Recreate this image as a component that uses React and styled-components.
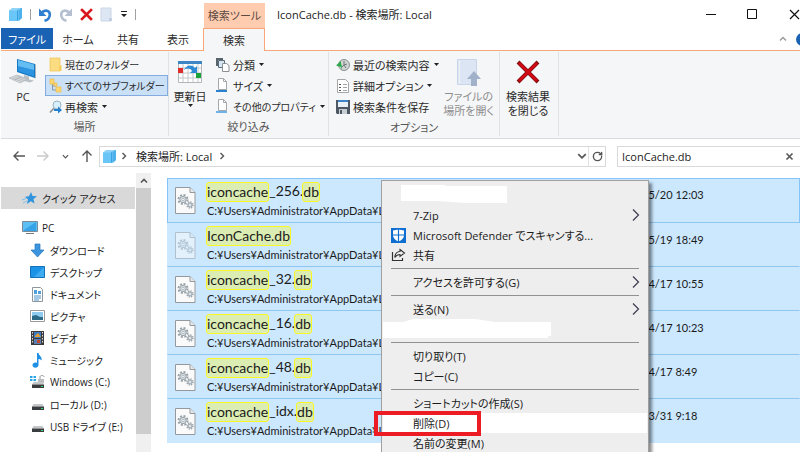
import React, { useState } from 'react';
import styled, { createGlobalStyle } from 'styled-components';
import { RotateCw } from 'lucide-react';

const GlobalStyle = createGlobalStyle`
  * {
    box-sizing: border-box;
  }
  body {
    margin: 0;
    background: #fff;
  }
  body, button, input {
    font-family: "Open Sans", "Noto Sans CJK JP", sans-serif;
    font-size: 11px;
    font-feature-settings: "palt";
    color: #1b1b1b;
  }
  button {
    border: 0;
    padding: 0;
    margin: 0;
    background: none;
  }
  ul {
    list-style: none;
    margin: 0;
    padding: 0;
  }
  svg {
    display: block;
    flex: none;
  }
`;

const Explorer = styled.div`
  position: relative;
  display: flex;
  flex-direction: column;
  height: 100vh;
  padding-left: 1px;
  overflow: hidden;
  background: #fff;
`;

/* ---------- title bar and tabs ---------- */

const TitleBar = styled.header`
  display: flex;
  align-items: center;
  height: 28px;
  flex: none;
`;

const QuickTools = styled.div`
  display: flex;
  align-items: center;
  gap: 7px;
  width: 203px;
  padding-left: 7px;
`;

const ToolButton = styled.button`
  display: flex;
`;

const ToolDivider = styled.span`
  width: 1px;
  height: 11px;
  background: #a0a0a0;
`;

const ToolTabLabel = styled.div`
  align-self: flex-end;
  width: 61px;
  height: 25px;
  line-height: 25px;
  text-align: center;
  background: #ffccb0;
  color: #5c4a40;
`;

const Title = styled.h1`
  flex: 1;
  margin: 0;
  padding-left: 12px;
  font-size: 11px;
  font-weight: 400;
  white-space: nowrap;
`;

const WindowButtons = styled.div`
  display: flex;
  gap: 31px;
`;

const TabBar = styled.nav`
  display: flex;
  height: 23px;
  flex: none;
  border-bottom: 1px solid #f9a67a;
`;

const Tab = styled.button`
  width: ${(p) => p.$width || 50}px;
  height: 22px;
  color: #2b2b2b;
`;

const FileTab = styled(Tab)`
  height: 21px;
  background: #1a62b4;
  color: #fff;
`;

const ActiveTab = styled(Tab)`
  height: 23px;
  border: 1px solid #f9a67a;
  border-bottom: 0;
  background: #f5f6f7;
`;

const TabEnd = styled.div`
  display: flex;
  align-items: center;
  gap: 9px;
  margin-left: auto;
  margin-right: -9px;
`;

/* ---------- ribbon ---------- */

const Ribbon = styled.section`
  display: flex;
  height: 88px;
  flex: none;
  padding-top: 1px;
  background: #f5f6f7;
  border-bottom: 1px solid #dadbdc;
`;

const Group = styled.div`
  display: flex;
  flex-direction: column;
  width: ${(p) => p.$width}px;
  margin-bottom: 2px;
  padding-top: 2px;
  border-right: 1px solid #e0e1e2;
`;

const GroupBody = styled.div`
  display: flex;
  height: 65px;
`;

const GroupLabel = styled.div`
  line-height: 20px;
  text-align: center;
  color: #555;
`;

const BigButton = styled.button`
  display: flex;
  flex-direction: column;
  align-items: center;
  width: ${(p) => p.$width}px;
  flex: none;
  padding-top: 4px;
  line-height: 14px;
  white-space: nowrap;
  color: ${(p) => (p.disabled ? '#8d8d8d' : '#2b2b2b')};
  svg:first-child {
    margin-bottom: 4px;
  }
`;

const SmallColumn = styled.div`
  display: flex;
  flex-direction: column;
  flex: none;
  padding-left: ${(p) => (p.$inset ? 3 : 0)}px;
`;

const SmallButton = styled.button`
  display: flex;
  align-items: center;
  gap: 3px;
  height: 21px;
  padding: 0 2px 0 3px;
  font-size: ${(p) => (p.$long ? 10 : 11)}px;
  white-space: nowrap;
  color: #2b2b2b;
  border: 1px solid ${(p) => (p.$on ? '#84abe0' : 'transparent')};
  background: ${(p) => (p.$on ? '#c9e0f7' : 'transparent')};
`;

/* ---------- address row ---------- */

const AddressRow = styled.div`
  display: flex;
  align-items: center;
  height: 34px;
  flex: none;
`;

const NavButtons = styled.div`
  display: flex;
  align-items: center;
  justify-content: space-between;
  width: 98px;
  padding: 0 6px 0 12px;
`;

const AddressBox = styled.div`
  display: flex;
  align-items: center;
  flex: 1;
  height: 21px;
  padding-left: 2px;
  border: 1px solid #d9d9d9;
`;

const Crumb = styled.a`
  margin: 0 6px;
  color: #1b1b1b;
  text-decoration: none;
  white-space: nowrap;
`;

const FirstChevron = styled.span`
  margin: 0 2px 0 3px;
`;

const AddressTools = styled.div`
  display: flex;
  align-items: center;
  align-self: stretch;
  margin-left: auto;
`;

const Refresh = styled.button`
  display: flex;
  align-items: center;
  justify-content: center;
  align-self: stretch;
  width: 17px;
  margin-left: 1px;
  border-left: 1px solid #e3e3e3;
`;

const SearchBox = styled.form`
  display: flex;
  align-items: center;
  width: 183px;
  height: 21px;
  margin-left: 11px;
  padding: 0 6px 0 4px;
  border: 1px solid #d9d9d9;
  border-right: 0;
`;

const SearchInput = styled.input`
  flex: 1;
  min-width: 0;
  border: 0;
  padding: 0;
  outline: none;
`;

/* ---------- side bar ---------- */

const Content = styled.div`
  display: flex;
  flex: 1;
  min-height: 0;
`;

const SideBar = styled.nav`
  width: 134px;
  flex: none;
  padding-top: 14px;
  overflow: hidden;
`;

const SideItem = styled.a`
  display: flex;
  align-items: center;
  gap: ${(p) => (p.$deep ? 5 : 4)}px;
  height: 22px;
  padding-left: ${(p) => (p.$deep ? 29 : 21)}px;
  margin-bottom: ${(p) => (p.$selected ? 8 : 0)}px;
  background: ${(p) => (p.$selected ? '#d9d9d9' : 'transparent')};
  color: #1b1b1b;
  font-size: 10px;
  text-decoration: none;
  white-space: nowrap;
`;

const ScrollTrack = styled.div`
  display: flex;
  flex-direction: column;
  width: 15px;
  flex: none;
  margin-left: 1px;
  background: #f0f0f0;
`;

const ScrollArrow = styled.button`
  display: flex;
  align-items: center;
  justify-content: center;
  height: 15px;
`;

const ScrollThumb = styled.div`
  flex: 1;
  margin-bottom: 18px;
  background: #cdcdcd;
`;

/* ---------- file list ---------- */

const FilePane = styled.main`
  flex: 1;
  min-width: 0;
  padding: 5px 0 0 16px;
`;

const FileRow = styled.li`
  display: flex;
  align-items: center;
  height: ${(p) => (p.$focused ? 45 : 44)}px;
  padding-left: 7px;
  font-family: Lato, "Noto Sans CJK JP", sans-serif;
  background: #cce8ff;
  border: 1px solid ${(p) => (p.$focused ? '#84c4f8' : '#cce8ff')};
  border-bottom-color: ${(p) => (p.$last ? '#cce8ff' : '#8fc6f0')};
`;

const FileText = styled.div`
  flex: 1;
  min-width: 0;
  padding-left: 11px;
`;

const FileName = styled.div`
  display: flex;
  font-size: 14px;
  line-height: 18px;
`;

const Mark = styled.mark`
  margin-left: -1px;
  border: 1px solid #fbf723;
  border-radius: 3px;
  background: #dcedb4;
  color: #1b1b1b;
`;

const FilePath = styled.div`
  line-height: 18px;
  white-space: nowrap;
`;

const FileDate = styled.time`
  width: 181px;
  flex: none;
  align-self: flex-start;
  padding-top: 7px;
  line-height: 18px;
`;

/* ---------- context menu ---------- */

const Menu = styled.div`
  position: absolute;
  top: 180px;
  left: 381px;
  width: 268px;
  padding: 4px 1px;
  border: 1px solid #a0a0a0;
  background: #eee;
  box-shadow: 3px 3px 3px rgba(0, 0, 0, 0.45);
`;

const MenuItem = styled.button`
  position: relative;
  display: grid;
  grid-template-columns: 30px 1fr 22px;
  align-items: center;
  width: 100%;
  height: 20px;
  text-align: left;
  white-space: nowrap;
  background: ${(p) => (p.$active ? '#fff' : 'transparent')};
  svg {
    justify-self: center;
  }
`;

const MenuLine = styled.hr`
  height: 1px;
  margin: 3px 8px;
  border: 0;
  background: #919191;
`;

const Blank = styled.div`
  height: 20px;
`;

const RedFrame = styled.span`
  position: absolute;
  top: -2px;
  left: -9px;
  width: 107px;
  height: 25px;
  border: 4px solid #ed1c24;
`;

/* ---------- icons ---------- */

const Caret = () => (
  <svg width="7" height="4" viewBox="0 0 7 4">
    <path d="M1 0h5L3.5 3z" fill="#222" />
  </svg>
);

const Chevron = ({ size = 8, dir = 'right', color = '#555', weight = 1.4 }) => {
  const paths = {
    right: 'M2.5 1l3 3-3 3',
    down: 'M1 2.5l3 3 3-3',
    up: 'M1 5.5l3-3 3 3',
  };
  return (
    <svg width={size} height={size} viewBox="0 0 8 8">
      <path d={paths[dir]} fill="none" stroke={color} strokeWidth={weight} />
    </svg>
  );
};

const MenuChevron = () => (
  <svg width="8" height="14" viewBox="0 0 8 14">
    <path d="M1 1.5L6.5 7 1 12.5" fill="none" stroke="#3c3c50" strokeWidth="1.2" />
  </svg>
);

const StackIcon = () => (
  <svg width="15" height="15" viewBox="0 0 15 15">
    <path d="M1 3.5L4 1h10v10l-3 3H1z" fill="#8fd3f8" />
    <path d="M1 3.5h8V14H1z" fill="#6ac6f7" />
    <path d="M9 3.5L10.500 2v11L9 14z" fill="#37a2e4" />
    <path d="M11 3l2-2h1v10l-3 2.500z" fill="#4cb2ec" />
  </svg>
);

const UndoIcon = ({ color, flip }) => (
  <svg width="14" height="15" viewBox="0 0 14 15">
    <g transform={flip ? 'matrix(-1 0 0 1 14 0)' : undefined}>
      <path d="M3 6.500C7 1.800 12 3.500 11.800 8 11.600 11 9.500 13 6.500 13.800" fill="none" stroke={color} strokeWidth="2.600" />
      <path d="M1 1.500v7.500h7.500z" fill={color} />
    </g>
  </svg>
);

const DeleteIcon = () => (
  <svg width="13" height="13" viewBox="0 0 13 13">
    <path d="M2 2l9 9M11 2l-9 9" stroke="#d9161c" strokeWidth="2.600" strokeLinecap="square" />
  </svg>
);

const BlankPageIcon = () => (
  <svg width="13" height="15" viewBox="0 0 13 15">
    <path d="M1 1h10v13H1z" fill="#dde6f3" stroke="#cbd6e6" />
    <path d="M9 11h3v3H9z" fill="#c3cfe1" />
  </svg>
);

const CustomizeIcon = () => (
  <svg width="8" height="8" viewBox="0 0 8 8">
    <path d="M1 1h6v1H1zM1 4h6L4 7z" fill="#222" />
  </svg>
);

const MinimizeIcon = () => (
  <svg width="10" height="11" viewBox="0 0 10 11">
    <path d="M0 5.500h10" stroke="#111" />
  </svg>
);

const MaximizeIcon = () => (
  <svg width="11" height="11" viewBox="0 0 11 11">
    <path d="M.5.500h9v9h-9z" fill="none" stroke="#111" />
  </svg>
);

const CloseIcon = () => (
  <svg width="11" height="11" viewBox="0 0 11 11">
    <path d="M1 1l9 9M10 1l-9 9" stroke="#111" strokeWidth="1.200" />
  </svg>
);

const HelpIcon = () => (
  <svg width="13" height="13" viewBox="0 0 13 13">
    <circle cx="6.500" cy="6.500" r="6.500" fill="#1a62b4" />
    <path d="M5 5c0-2 3-2 3 0 0 1-1.500 1-1.500 2.500M6.500 9v1" stroke="#fff" fill="none" />
  </svg>
);

const ComputerIcon = () => (
  <svg width="30" height="28" viewBox="0 0 30 28">
    <path d="M9 1l18 5v14l-18-6z" fill="#1679c4" />
    <path d="M10 2l16 4.500v6L10 9z" fill="#63bdf2" />
    <path d="M10 8l16 4v6.500L10 13z" fill="#2b93df" />
    <path d="M27 6l1 .5v14l-1-.5z" fill="#a9b4bd" />
    <path d="M16 17l5 1.500v3l5 1-4 2-9-2.500 3-1z" fill="#b9c0c6" />
    <path d="M1 20l8-3 11 4-8 4z" fill="#d8dcdf" stroke="#a7adb2" strokeWidth=".6" />
    <path d="M4 20l10 3.700M6.500 19l10 3.700M9 18l9 3.500M6 22l7-3" stroke="#a2a9af" strokeWidth=".6" />
  </svg>
);

const FolderIcon = () => (
  <svg width="13" height="15" viewBox="0 0 13 15">
    <path d="M1 1h10v13H1z" fill="#fbdc80" stroke="#f2c961" strokeWidth=".8" />
    <path d="M10 9l2.500-1v6H10z" fill="#f6cc5c" />
  </svg>
);

const SubfolderIcon = () => (
  <svg width="13" height="15" viewBox="0 0 13 15">
    <path d="M3.500 6v6h4M3.500 8h4" stroke="#8b98a5" fill="none" />
    <path d="M1 1h4v5H1zM5 5h3v3H5zM7 9h5v5H7z" fill="#fbd671" stroke="#edbd48" strokeWidth=".7" />
  </svg>
);

const SearchAgainIcon = () => (
  <svg width="13" height="14" viewBox="0 0 13 14">
    <path d="M5 8l-4 4.500" stroke="#8d9499" strokeWidth="1.800" />
    <circle cx="8" cy="5" r="4" fill="#d8effc" stroke="#9db4c4" />
    <path d="M5 9h4V6.500l4 3.500-4 3.500V11H5z" fill="#2380d0" />
  </svg>
);

const CalendarIcon = () => (
  <svg width="26" height="28" viewBox="0 0 26 28">
    <path d="M1.500 3.500h23v21h-23z" fill="#fff" stroke="#b2b7bb" />
    <path d="M1 3h24v3H1z" fill="#3c85c7" />
    <path d="M6 6v18M11 6v18M16 6v18M21 6v18M2 10h22M2 15h22M2 20h22" stroke="#c4c9cc" />
    <path d="M1 10h5v5H1z" fill="#e02b2b" />
    <path d="M19 15h5v5h-5z" fill="#19a33a" />
    <path d="M7 12c2-5 8-6 11-2l2-2v7h-7l2-2c-2-3-5-3-8-1z" fill="#2f8ad6" />
  </svg>
);

const TypeIcon = () => (
  <svg width="15" height="15" viewBox="0 0 15 15">
    <path d="M1 1h7v2H3v6H1z" fill="#59636c" />
    <path d="M3.500 3.500h6v7h-6z" fill="#d7e7f5" stroke="#5a6c7a" />
    <path d="M7.500 6.500h4l2.500 2v6H7.500z" fill="#fff" stroke="#8a8f94" />
  </svg>
);

const SizeIcon = ({ bar }) => (
  <svg width="15" height="15" viewBox="0 0 15 15">
    <path d="M3.500.500h5l3 3v8h-8z" fill="#fff" stroke="#a4a8ab" />
    <path d="M8.500.500v3h3" fill="none" stroke="#a4a8ab" />
    <path d="M1 12h11v2H1z" fill={bar} />
  </svg>
);

const RecentIcon = () => (
  <svg width="14" height="14" viewBox="0 0 14 14">
    <circle cx="8" cy="7" r="5.500" fill="#cfd5d3" stroke="#8a918f" />
    <path d="M8 3v4l3-1M8 7l-3 3M8 7l2 3" stroke="#6f7775" fill="none" />
    <path d="M0 7.500L5 3v3c1 1 1 3 0 6V9z" fill="#2ba84a" />
  </svg>
);

const AdvancedIcon = () => (
  <svg width="14" height="14" viewBox="0 0 14 14">
    <path d="M1.500.500h8l3 3v10h-11z" fill="#fff" stroke="#a6a6a6" />
    <path d="M3 5h2v1H3zM3 8h2v1H3zM3 11h2v1H3z" fill="#555" />
    <path d="M7 5.500h4M7 8.500h4M7 11.500h4" stroke="#a5a5a5" />
  </svg>
);

const SaveIcon = () => (
  <svg width="14" height="14" viewBox="0 0 14 14">
    <path d="M0 0h14v14H1l-1-1z" fill="#4e5864" />
    <path d="M2 0h10v7H2z" fill="#e9f1f8" />
    <path d="M2 0h10v2H2z" fill="#3e83c9" />
    <path d="M3 9h8v5H3z" fill="#c9ced3" />
    <path d="M4 10h2v4H4z" fill="#4e5864" />
  </svg>
);

const OpenLocationIcon = () => (
  <svg width="26" height="28" viewBox="0 0 26 28">
    <path d="M1.500 1.500h19v25h-19z" fill="#dbe5f3" stroke="#cad6e8" />
    <path d="M3.500 2v24" stroke="#eef3fa" />
    <path d="M18 13l7 8h-4v7h-6v-7h-4z" fill="#a2b1ca" />
  </svg>
);

const CloseSearchIcon = () => (
  <svg width="24" height="28" viewBox="0 0 24 28">
    <path d="M2 4l20 20M22 4L2 24" stroke="#7e1014" strokeWidth="4" />
    <path d="M3 5l18 18M21 5L3 23" stroke="#cf0a12" strokeWidth="2.600" />
  </svg>
);

const ArrowIcon = ({ color, up }) => (
  <svg width="12" height="12" viewBox="0 0 12 12">
    <path d={up ? 'M6 12V1M1.500 5.500L6 1l4.500 4.500' : 'M12 6H1M5.500 1.500L1 6l4.500 4.500'} fill="none" stroke={color} strokeWidth="1.400" />
  </svg>
);

const ForwardIcon = () => (
  <svg width="12" height="12" viewBox="0 0 12 12">
    <path d="M0 6h11M6.500 1.500L11 6l-4.500 4.500" fill="none" stroke="#c9c9c9" strokeWidth="1.400" />
  </svg>
);

const ClearIcon = () => (
  <svg width="9" height="9" viewBox="0 0 9 9">
    <path d="M1.500 1.500l6 6M7.500 1.500l-6 6" stroke="#555" strokeWidth="1.600" />
  </svg>
);

const StarIcon = () => (
  <svg width="16" height="14" viewBox="0 0 16 14">
    <path d="M9 1l1.500 4 4.500.300-3.500 2.700 1 4.500-3.700-2.300L5 13l1-4.500-3-2.800 4-.4z" fill="#2f93dd" />
    <path d="M0 9l4-1.500M1 12l4-2" stroke="#7fbfec" />
  </svg>
);

const PcIcon = () => (
  <svg width="16" height="14" viewBox="0 0 16 14">
    <path d="M.5.500h15v10H.5z" fill="#5cc0f5" stroke="#7b8a94" />
    <path d="M2 9L14 1v9H2z" fill="#35a3e8" />
    <path d="M4 12h8v1H4z" fill="#6f7b84" />
  </svg>
);

const DownloadIcon = () => (
  <svg width="15" height="15" viewBox="0 0 15 15">
    <path d="M5 1h5v6h4l-6.500 7L1 7h4z" fill="#3a94de" stroke="#2a76bd" strokeWidth=".7" />
  </svg>
);

const DesktopIcon = () => (
  <svg width="15" height="13" viewBox="0 0 15 13">
    <path d="M.5.500h14v11H.5z" fill="#1b93e6" stroke="#1571b6" />
    <path d="M14 1v10H4z" fill="#3fabf1" />
  </svg>
);

const DocumentIcon = () => (
  <svg width="15" height="15" viewBox="0 0 15 15">
    <path d="M2.500.500h8l2 2v12h-10z" fill="#fff" stroke="#8e979e" />
    <path d="M4 3h3v4H4zM8 4h3v3H8z" fill="#4da0dc" />
    <path d="M4 9h7M4 11h7M4 13h5" stroke="#4b90c8" />
  </svg>
);

const PictureIcon = () => (
  <svg width="15" height="12" viewBox="0 0 15 12">
    <path d="M.5.500h14v11H.5z" fill="#fff" stroke="#9a9a9a" />
    <path d="M2 2h11v8H2z" fill="#8fcaf0" />
    <path d="M2 6l4-1 4 2h3v3H2z" fill="#2d6a85" />
  </svg>
);

const VideoIcon = () => (
  <svg width="15" height="14" viewBox="0 0 15 14">
    <path d="M1 0h13v14H1z" fill="#3b3b3b" />
    <path d="M4 1h7v6H4z" fill="#3f79c4" />
    <path d="M4 8h7v5H4z" fill="#5b7fb0" />
    <path d="M5 5l3-3 3 4H5z" fill="#e0a030" />
    <path d="M7 9h3v3H7z" fill="#c0482f" />
    <path d="M2.500 1v12M12.500 1v12" stroke="#ddd" strokeDasharray="1.500 1.500" />
  </svg>
);

const MusicIcon = () => (
  <svg width="15" height="15" viewBox="0 0 15 15">
    <path d="M7 0h1.500c.5 3 4 3.500 3 7.500C11 6.500 9.500 6 8.500 6v6c0 3.500-6 3.500-6 .3C2.500 10 5 9 7 10z" fill="#1e90e6" />
  </svg>
);

const DriveIcon = ({ system }) => (
  <svg width="15" height="14" viewBox="0 0 15 14">
    {system && (
      <>
        <path d="M0 1h2.500v2H0zM3.500 1H6v2H3.500zM0 4h2.500v2H0zM3.500 4H6v2H3.500z" fill="#27a5e8" />
        <path d="M8 4h6v4H8z" fill="#b9bdc0" />
        <path d="M10 4V2c0-2 4-2 4 0" fill="none" stroke="#8e9396" />
      </>
    )}
    <path d="M3.500 7h9L14 9.500H2z" fill="#c4c7c9" />
    <path d="M2 9.500h12V13H2z" fill="#3a3d3f" />
    <path d="M11 11h2v1h-2z" fill="#44d366" />
  </svg>
);

const GearPageIcon = ({ faded }) => (
  <svg width="21" height="27" viewBox="0 0 21 27" opacity={faded ? 0.5 : 1}>
    <path d="M.5.500H15l5 5v21H.5z" fill="#fafafa" stroke="#96999c" />
    <path d="M15 .5v5h5" fill="#e6e8ea" stroke="#96999c" />
    <circle cx="8" cy="12.500" r="4.500" fill="none" stroke="#98a3aa" strokeWidth="2" strokeDasharray="2 1.530" />
    <circle cx="8" cy="12.500" r="3.200" fill="#d9e0e5" stroke="#98a3aa" />
    <circle cx="8" cy="12.500" r="1.200" fill="#fff" stroke="#98a3aa" strokeWidth=".7" />
    <circle cx="15" cy="18" r="3" fill="none" stroke="#98a3aa" strokeWidth="1.500" strokeDasharray="1.300 1.050" />
    <circle cx="15" cy="18" r="2" fill="#d0d8de" stroke="#98a3aa" />
    <circle cx="15" cy="18" r=".7" fill="#fff" />
  </svg>
);

const DefenderIcon = () => (
  <svg width="15" height="15" viewBox="0 0 15 15">
    <path d="M0 0h15v15H0z" fill="#0f6fd1" />
    <path d="M7.500 1.500l5.500 1v4.500c0 3-2.500 5.500-5.500 6.500C4.500 12.500 2 10 2 7V2.500z" fill="#fff" />
    <path d="M7.500 1v13M1 7h13" stroke="#0f6fd1" strokeWidth="1.200" />
  </svg>
);

const ShareIcon = () => (
  <svg width="15" height="14" viewBox="0 0 15 14">
    <path d="M1.500 4v8.500h10V10" fill="none" stroke="#333" strokeWidth="1.200" />
    <path d="M9 1.500L13.500 5 9 8.500v-2C6.500 6.500 5 7.500 3.800 9.500 4 6 6 3.700 9 3.500z" fill="none" stroke="#333" strokeWidth="1.100" />
  </svg>
);

/* ---------- data ---------- */

const places = [
  { name: 'クイック アクセス', icon: <StarIcon />, selected: true },
  { name: 'PC', icon: <PcIcon /> },
  { name: 'ダウンロード', icon: <DownloadIcon />, deep: true },
  { name: 'デスクトップ', icon: <DesktopIcon />, deep: true },
  { name: 'ドキュメント', icon: <DocumentIcon />, deep: true },
  { name: 'ピクチャ', icon: <PictureIcon />, deep: true },
  { name: 'ビデオ', icon: <VideoIcon />, deep: true },
  { name: 'ミュージック', icon: <MusicIcon />, deep: true },
  { name: 'Windows (C:)', icon: <DriveIcon system />, deep: true },
  { name: 'ローカル (D:)', icon: <DriveIcon />, deep: true },
  { name: 'USB ドライブ (E:)', icon: <DriveIcon />, deep: true },
];

// name is split so that the matched parts can be marked
const files = [
  { name: ['iconcache', '_256.', 'db'], date: '2020/5/20 12:03' },
  { name: ['IconCache.db'], date: '2020/5/19 18:49', faded: true },
  { name: ['iconcache', '_32.', 'db'], date: '2020/4/17 10:55' },
  { name: ['iconcache', '_16.', 'db'], date: '2020/4/17 10:23' },
  { name: ['iconcache', '_48.', 'db'], date: '2020/4/17 8:49' },
  { name: ['iconcache', '_idx.', 'db'], date: '2020/3/31 9:18' },
];

const path = 'C:¥Users¥Administrator¥AppData¥Local';

const RibbonBar = () => (
  <Ribbon>
    <Group $width={168}>
      <GroupBody>
        <BigButton $width={44}>
          <ComputerIcon />
          PC
        </BigButton>
        <SmallColumn>
          <SmallButton $long><FolderIcon />現在のフォルダー</SmallButton>
          <SmallButton $long $on><SubfolderIcon />すべてのサブフォルダー</SmallButton>
          <SmallButton><SearchAgainIcon />再検索<Caret /></SmallButton>
        </SmallColumn>
      </GroupBody>
      <GroupLabel>場所</GroupLabel>
    </Group>
    <Group $width={160}>
      <GroupBody>
        <BigButton $width={42}>
          <CalendarIcon />
          更新日
          <Caret />
        </BigButton>
        <SmallColumn>
          <SmallButton><TypeIcon />分類<Caret /></SmallButton>
          <SmallButton><SizeIcon bar="#2b7fd0" />サイズ<Caret /></SmallButton>
          <SmallButton $long><SizeIcon bar="#6fb2e8" />その他のプロパティ<Caret /></SmallButton>
        </SmallColumn>
      </GroupBody>
      <GroupLabel>絞り込み</GroupLabel>
    </Group>
    <Group $width={171}>
      <GroupBody>
        <SmallColumn $inset>
          <SmallButton><RecentIcon />最近の検索内容<Caret /></SmallButton>
          <SmallButton><AdvancedIcon />詳細オプション<Caret /></SmallButton>
          <SmallButton><SaveIcon />検索条件を保存</SmallButton>
        </SmallColumn>
        <BigButton $width={52} disabled>
          <OpenLocationIcon />
          <span>ファイルの</span>
          <span>場所を開く</span>
        </BigButton>
      </GroupBody>
      <GroupLabel>オプション</GroupLabel>
    </Group>
    <Group $width={59}>
      <GroupBody>
        <BigButton $width={56}>
          <CloseSearchIcon />
          <span>検索結果</span>
          <span>を閉じる</span>
        </BigButton>
      </GroupBody>
    </Group>
  </Ribbon>
);

const ContextMenu = () => (
  <Menu role="menu">
    <Blank>
      <svg width="130" height="20" viewBox="0 0 130 20">
        <path d="M18 0l44-1v2h62v17H83l-29-2H18z" fill="#fff" />
      </svg>
    </Blank>
    <MenuItem role="menuitem"><i />7-Zip<MenuChevron /></MenuItem>
    <MenuItem role="menuitem"><DefenderIcon />Microsoft Defender でスキャンする...</MenuItem>
    <MenuItem role="menuitem"><ShareIcon />共有</MenuItem>
    <MenuLine />
    <MenuItem role="menuitem"><i />アクセスを許可する(G)<MenuChevron /></MenuItem>
    <MenuLine />
    <MenuItem role="menuitem"><i />送る(N)<MenuChevron /></MenuItem>
    <Blank>
      <svg width="170" height="20" viewBox="0 0 170 20">
        <path d="M0 3h20l10-3h62l20 3h56v14h-3v2H0z" fill="#fff" />
      </svg>
    </Blank>
    <MenuLine />
    <MenuItem role="menuitem"><i />切り取り(T)</MenuItem>
    <MenuItem role="menuitem"><i />コピー(C)</MenuItem>
    <MenuLine />
    <MenuItem role="menuitem"><i />ショートカットの作成(S)</MenuItem>
    <MenuItem role="menuitem" $active><i />削除(D)<RedFrame /></MenuItem>
    <MenuItem role="menuitem"><i />名前の変更(M)</MenuItem>
  </Menu>
);

const App = () => {
  const [query, setQuery] = useState('IconCache.db');

  return (
    <>
      <GlobalStyle />
      <Explorer>
        <TitleBar>
          <QuickTools>
            <StackIcon />
            <ToolDivider />
            <ToolButton aria-label="元に戻す"><UndoIcon color="#2f7fd0" /></ToolButton>
            <ToolButton aria-label="やり直し"><UndoIcon color="#b4bfd0" flip /></ToolButton>
            <ToolButton aria-label="削除"><DeleteIcon /></ToolButton>
            <ToolButton aria-label="プロパティ"><BlankPageIcon /></ToolButton>
            <ToolButton aria-label="カスタマイズ"><CustomizeIcon /></ToolButton>
            <ToolDivider />
          </QuickTools>
          <ToolTabLabel>検索ツール</ToolTabLabel>
          <Title>IconCache.db - 検索場所: Local</Title>
          <WindowButtons>
            <ToolButton aria-label="最小化"><MinimizeIcon /></ToolButton>
            <ToolButton aria-label="最大化"><MaximizeIcon /></ToolButton>
            <ToolButton aria-label="閉じる"><CloseIcon /></ToolButton>
          </WindowButtons>
        </TitleBar>
        <TabBar>
          <FileTab $width={52}>ファイル</FileTab>
          <Tab>ホーム</Tab>
          <Tab>共有</Tab>
          <Tab>表示</Tab>
          <ActiveTab $width={62}>検索</ActiveTab>
          <TabEnd>
            <Chevron dir="up" color="#999" />
            <HelpIcon />
          </TabEnd>
        </TabBar>
        <RibbonBar />
        <AddressRow>
          <NavButtons>
            <ToolButton aria-label="戻る"><ArrowIcon color="#555" /></ToolButton>
            <ToolButton aria-label="進む"><ForwardIcon /></ToolButton>
            <ToolButton aria-label="履歴"><Chevron dir="down" size={7} /></ToolButton>
            <ToolButton aria-label="上へ"><ArrowIcon color="#555" up /></ToolButton>
          </NavButtons>
          <AddressBox>
            <StackIcon />
            <FirstChevron><Chevron /></FirstChevron>
            <Crumb href="#local">検索場所: Local</Crumb>
            <Chevron />
            <AddressTools>
              <Chevron dir="down" size={10} />
              <Refresh aria-label="更新"><RotateCw size={11} color="#555" strokeWidth={3} /></Refresh>
            </AddressTools>
          </AddressBox>
          <SearchBox onSubmit={(e) => e.preventDefault()}>
            <SearchInput
              aria-label="検索"
              value={query}
              onChange={(e) => setQuery(e.target.value)}
            />
            <ToolButton type="button" aria-label="クリア" onClick={() => setQuery('')}>
              <ClearIcon />
            </ToolButton>
          </SearchBox>
        </AddressRow>
        <Content>
          <SideBar>
            {places.map((place) => (
              <SideItem
                key={place.name}
                href="#place"
                $deep={place.deep}
                $selected={place.selected}
              >
                {place.icon}
                {place.name}
              </SideItem>
            ))}
          </SideBar>
          <ScrollTrack>
            <ScrollArrow aria-label="上へスクロール">
              <Chevron dir="up" weight={1.6} />
            </ScrollArrow>
            <ScrollThumb />
          </ScrollTrack>
          <FilePane>
            <ul>
              {files.map((file, i) => (
                <FileRow key={file.date} $focused={i === 0} $last={i === files.length - 1}>
                  <GearPageIcon faded={file.faded} />
                  <FileText>
                    <FileName>
                      {file.name.map((part, n) =>
                        n % 2 === 0 ? <Mark key={part}>{part}</Mark> : <span key={part}>{part}</span>
                      )}
                    </FileName>
                    <FilePath>{path}</FilePath>
                  </FileText>
                  <FileDate>{file.date}</FileDate>
                </FileRow>
              ))}
            </ul>
          </FilePane>
        </Content>
        <ContextMenu />
      </Explorer>
    </>
  );
};

export default App;
